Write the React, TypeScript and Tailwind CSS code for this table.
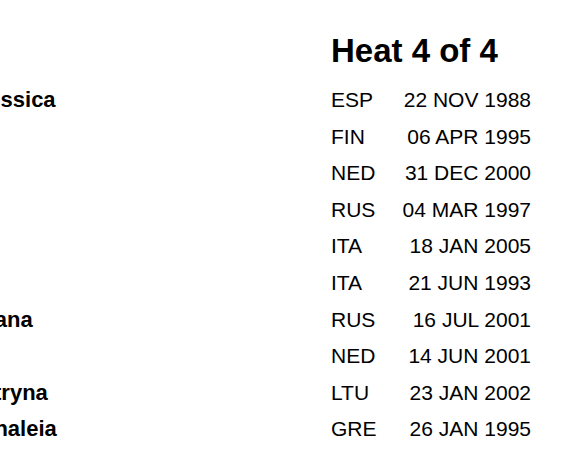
const rows = [
  { name: "VALL MONTERO Jessica", nat: "ESP", dob: "22 NOV 1988" },
  { name: "KIVIRINTA Veera", nat: "FIN", dob: "06 APR 1995" },
  { name: "SCHOUTEN Tes", nat: "NED", dob: "31 DEC 2000" },
  { name: "TEMNIKOVA Maria", nat: "RUS", dob: "04 MAR 1997" },
  { name: "PILATO Benedetta", nat: "ITA", dob: "18 JAN 2005" },
  { name: "CARRARO Martina", nat: "ITA", dob: "21 JUN 1993" },
  { name: "KUZNETSOVA Tatyana", nat: "RUS", dob: "16 JUL 2001" },
  { name: "BAAS Lotte", nat: "NED", dob: "14 JUN 2001" },
  { name: "TETEREVKOVA Kotryna", nat: "LTU", dob: "23 JAN 2002" },
  { name: "PAPAGEORGIOU Thaleia", nat: "GRE", dob: "26 JAN 1995" },
]

export default function App() {
  return (
    <div className="h-[460px] w-[580px] overflow-hidden bg-white font-['Liberation_Sans',Arial,Helvetica,sans-serif] text-black">
      {/* start list scrolled sideways, so the name column is cut at the left edge */}
      <div className="-ml-[204px] w-[840px] pt-[31px]">
        <div className="grid grid-cols-[535px_60px_140px]">
          <div />
          <h2 className="col-span-2 h-[51px] text-[33px] font-bold leading-[40px]">Heat 4 of 4</h2>
        </div>
        {rows.map((r) => (
          <div key={r.nat + r.dob} className="grid h-[36.6px] grid-cols-[535px_60px_140px] items-center text-[21px] leading-[36.6px]">
            <div className="whitespace-nowrap text-[22px] font-bold">{r.name}</div>
            <div>{r.nat}</div>
            <div className="text-right">{r.dob}</div>
          </div>
        ))}
      </div>
    </div>
  )
}
